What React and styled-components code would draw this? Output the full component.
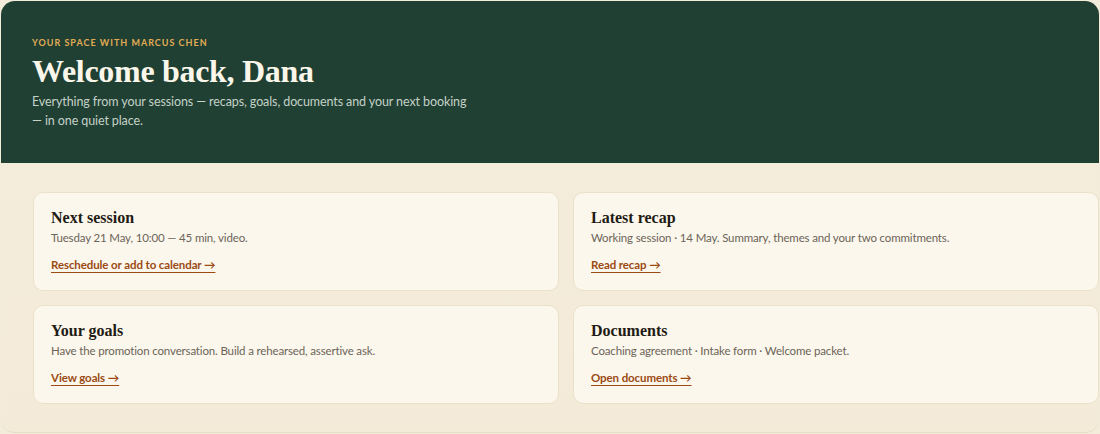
import styled, { createGlobalStyle } from 'styled-components'

const GlobalStyle = createGlobalStyle`
    body {
        margin: 0;
        background: #f4ecdb;
        font-family: "Lato", "Liberation Sans", sans-serif;
    }
`;

const Panel = styled.div`
    margin: 1px 1px 0 1px;
    border-radius: 14px;
    overflow: hidden;
    background: linear-gradient(180deg, #f5eddd 0%, #f3ead8 100%);
    border-bottom: 1px solid #e6dbc3;
    height: 432px;
    box-sizing: border-box;
`;

const Hero = styled.header`
    background: #1f4033;
    padding: 36px 31px 0 31px;
    height: 162px;
    box-sizing: border-box;
`;

const Eyebrow = styled.div`
    color: #e2ac55;
    font-size: 9px;
    font-weight: 700;
    letter-spacing: 1px;
    text-transform: uppercase;
`;

const Title = styled.h1`
    margin: 5px 0 0 0;
    color: #fbf6ea;
    font-family: "Liberation Serif", "DejaVu Serif", serif;
    font-size: 32px;
    font-weight: 700;
    letter-spacing: -0.3px;
    line-height: 36px;
`;

const Lead = styled.p`
    margin: 3px 0 0 0;
    max-width: 440px;
    color: #c5d1c7;
    font-size: 12.5px;
    letter-spacing: -0.1px;
    line-height: 19px;
`;

const Grid = styled.div`
    display: grid;
    grid-template-columns: 1fr 1fr;
    gap: 14px;
    padding: 29px 0 0 32px;
`;

const Card = styled.section`
    background: #fcf7ec;
    border: 1px solid #ebe0c9;
    border-radius: 10px;
    padding: 15px 17px 0 17px;
    height: 99px;
    box-sizing: border-box;
`;

const CardTitle = styled.h2`
    margin: 0;
    color: #1f1b15;
    font-family: "Liberation Serif", "DejaVu Serif", serif;
    font-size: 16px;
    font-weight: 700;
    line-height: 20px;
`;

const CardText = styled.p`
    margin: 2px 0 0 0;
    color: #6b6459;
    font-size: 11.5px;
    letter-spacing: -0.15px;
    line-height: 16px;
`;

const CardLink = styled.a`
    display: inline-block;
    margin-top: 12px;
    color: #9b4a14;
    font-size: 11.5px;
    font-weight: 700;
    letter-spacing: -0.1px;
    text-decoration: underline;
    text-underline-offset: 3px;
    text-decoration-thickness: 1px;
    cursor: pointer;
`;

const cards = [
    { title: 'Next session', text: 'Tuesday 21 May, 10:00 — 45 min, video.', link: 'Reschedule or add to calendar →' },
    { title: 'Latest recap', text: 'Working session · 14 May. Summary, themes and your two commitments.', link: 'Read recap →' },
    { title: 'Your goals', text: 'Have the promotion conversation. Build a rehearsed, assertive ask.', link: 'View goals →' },
    { title: 'Documents', text: 'Coaching agreement · Intake form · Welcome packet.', link: 'Open documents →' },
];

const App = () => {
  return (
    <>
      <GlobalStyle />
      <Panel>
        <Hero>
          <Eyebrow>Your space with Marcus Chen</Eyebrow>
          <Title>Welcome back, Dana</Title>
          <Lead>Everything from your sessions — recaps, goals, documents and your next booking — in one quiet place.</Lead>
        </Hero>
        <Grid>
          {cards.map((c) => (
            <Card key={c.title}>
              <CardTitle>{c.title}</CardTitle>
              <CardText>{c.text}</CardText>
              <CardLink>{c.link}</CardLink>
            </Card>
          ))}
        </Grid>
      </Panel>
    </>
  )
};

export default App;
